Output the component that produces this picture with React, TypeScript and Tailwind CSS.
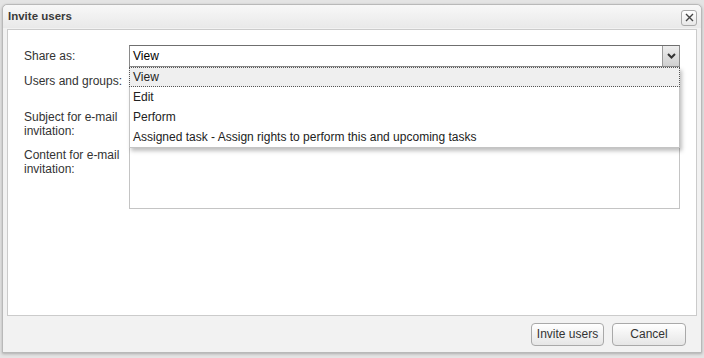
import { useState } from 'react';

const options = ['View', 'Edit', 'Perform', 'Assigned task - Assign rights to perform this and upcoming tasks'];

export default function App() {
  const [shareAs] = useState('View');

  return (
    <div className="w-[704px] h-[358px] bg-[#e4e4e4] pt-[4px] pl-[2px] font-['Liberation_Sans',Arial,sans-serif] text-[12px] text-[#333]">
      <div className="w-[700px] h-[349px] flex flex-col rounded-t-[5px] border border-[#b9b9b9] bg-[#f2f2f2] shadow-[0_1px_3px_rgba(0,0,0,0.25)]">
        {/* title bar */}
        <div className="h-[23px] flex items-center justify-between pl-[5px] pr-[4px] rounded-t-[5px] bg-gradient-to-b from-[#f8f8f8] to-[#e9e9e9]">
          <span className="font-bold text-[11.5px] text-[#3a3a3a]">Invite users</span>
          <button className="w-[16px] h-[16px] mt-[2px] flex items-center justify-center rounded-[3px] border border-[#aaa] bg-gradient-to-b from-white to-[#e8e8e8]">
            <svg width="9" height="9" viewBox="0 0 9 9">
              <path d="M1 1L8 8M8 1L1 8" stroke="#444" strokeWidth="1.4" />
            </svg>
          </button>
        </div>

        {/* body */}
        <div className="mx-[4px] mt-[1px] h-[287px] border border-[#cbcbcb] bg-white pl-[16px] pr-[16px] pt-[15px]">
          <div className="flex items-center h-[22px]">
            <label className="w-[105px]">Share as:</label>
            <div className="relative flex-1">
              <div className="h-[22px] flex items-stretch border border-[#8a8a8a] border-t-[#6f6f6f]">
                <span className="flex-1 pl-[3px] leading-[20px] text-black">{shareAs}</span>
                <span className="w-[17px] flex items-center justify-center border-l border-[#9a9a9a] bg-gradient-to-b from-[#eeeeee] to-[#cfcfcf]">
                  <svg width="9" height="6" viewBox="0 0 9 6">
                    <path d="M1 1L4.5 4.5L8 1" stroke="#333" strokeWidth="2" fill="none" />
                  </svg>
                </span>
              </div>
              <ul className="absolute left-0 right-0 top-full z-10 border border-t-0 border-[#c4c4c4] bg-white shadow-[2px_3px_4px_rgba(0,0,0,0.25)]">
                {options.map((o, i) => (
                  <li
                    key={o}
                    className={
                      i === 0
                        ? 'h-[20px] leading-[18px] pl-[3px] bg-[#efefef] border border-dotted border-[#555] -mx-[1px] text-[#222]'
                        : 'h-[20px] leading-[20px] pl-[3px] text-[#222]'
                    }
                  >
                    {o}
                  </li>
                ))}
              </ul>
            </div>
          </div>

          <div className="flex mt-[6px] h-[30px]">
            <label className="w-[105px] pt-[1px] leading-[14px]">Users and groups:</label>
            <div className="flex-1 border border-[#c4c4c4]" />
          </div>

          <div className="flex mt-[6px] h-[22px]">
            <label className="w-[105px] pt-[1px] leading-[14px]">
              Subject for e-mail
              <br />
              invitation:
            </label>
            <div className="flex-1 border border-[#c4c4c4]" />
          </div>

          <div className="flex mt-[16px] h-[62px]">
            <label className="w-[105px] pt-[1px] leading-[14px]">
              Content for e-mail
              <br />
              invitation:
            </label>
            <div className="flex-1 border border-[#c4c4c4]" />
          </div>
        </div>

        {/* footer */}
        <div className="flex-1 flex items-center justify-end gap-[8px] pr-[15px]">
          <button className="h-[23px] w-[73px] rounded-[4px] border border-[#a9a9a9] bg-gradient-to-b from-white to-[#e6e6e6] text-[12px] text-[#333]">Invite users</button>
          <button className="h-[23px] w-[74px] rounded-[4px] border border-[#a9a9a9] bg-gradient-to-b from-white to-[#e6e6e6] text-[12px] text-[#333]">Cancel</button>
        </div>
      </div>
    </div>
  );
}
